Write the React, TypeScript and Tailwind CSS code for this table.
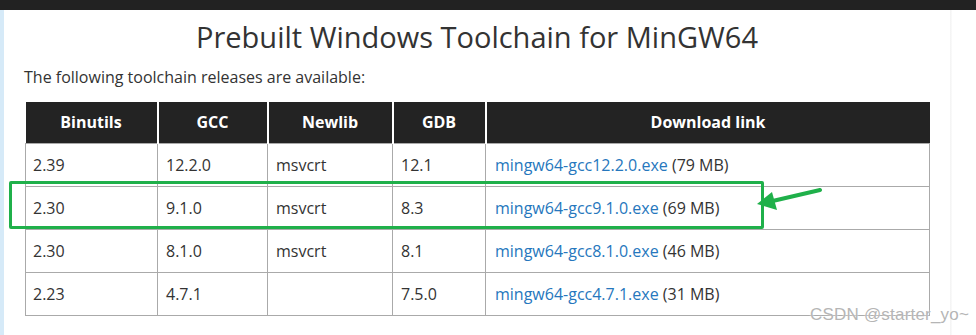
const rows = [
  { bin: "2.39", gcc: "12.2.0", newlib: "msvcrt", gdb: "12.1", file: "mingw64-gcc12.2.0.exe", size: "(79 MB)" },
  { bin: "2.30", gcc: "9.1.0", newlib: "msvcrt", gdb: "8.3", file: "mingw64-gcc9.1.0.exe", size: "(69 MB)" },
  { bin: "2.30", gcc: "8.1.0", newlib: "msvcrt", gdb: "8.1", file: "mingw64-gcc8.1.0.exe", size: "(46 MB)" },
  { bin: "2.23", gcc: "4.7.1", newlib: "", gdb: "7.5.0", file: "mingw64-gcc4.7.1.exe", size: "(31 MB)" },
];

const headers = ["Binutils", "GCC", "Newlib", "GDB", "Download link"];
const widths = ["w-[132px]", "w-[110px]", "w-[125px]", "w-[93px]", "w-[444px]"];

export default function App() {
  return (
    <div className="relative h-[335px] w-[976px] overflow-hidden bg-white font-['Open_Sans',sans-serif] text-[#333]">
      <div className="h-[10px] bg-[#222]" />

      <div className="flex h-[325px]">
        <div className="w-[4px] bg-[#d6eaf8]" />

        <main className="w-[946px]">
          <h1 className="mt-[7px] h-[40px] text-center text-[29px] leading-[40px] font-normal">
            Prebuilt Windows Toolchain for MinGW64
          </h1>

          <p className="mt-[8px] pl-[20px] text-[16px] leading-[24px]">
            The following toolchain releases are available:
          </p>

          <table className="mt-[13px] ml-[21px] table-fixed border-collapse text-[16px]">
            <thead>
              <tr className="h-[41px] bg-[#232323] text-white">
                {headers.map((h, i) => (
                  <th
                    key={h}
                    className={`${widths[i]} border-x-2 border-white p-0 text-center font-bold first:border-l-0 last:border-r-0`}
                  >
                    {h}
                  </th>
                ))}
              </tr>
            </thead>
            <tbody>
              {rows.map((r) => (
                <tr key={r.file} className="h-[43px]">
                  <td className="border border-[#aaa] px-[7px]">{r.bin}</td>
                  <td className="border border-[#aaa] px-[8px]">{r.gcc}</td>
                  <td className="border border-[#aaa] px-[8px]">{r.newlib}</td>
                  <td className="border border-[#aaa] px-[8px]">{r.gdb}</td>
                  <td className="border border-[#aaa] px-[9px]">
                    <a className="text-[#2677bd]">{r.file}</a> {r.size}
                  </td>
                </tr>
              ))}
            </tbody>
          </table>
        </main>

        <div className="w-[2px] bg-gradient-to-r from-[#f3f3f3] to-[#fafafa]" />
      </div>

      {/* highlight box + arrow */}
      <div className="absolute left-[9px] top-[181px] h-[48px] w-[755px] rounded-[2px] border-[3px] border-[#1fb04a]" />
      <svg className="absolute left-[750px] top-[180px]" width="80" height="35" viewBox="0 0 80 35">
        <line x1="70" y1="10" x2="14" y2="23" stroke="#1fb04a" strokeWidth="4" strokeLinecap="round" />
        <polygon points="7,24 22,12 27,30" fill="#1fb04a" />
      </svg>

      <div className="absolute left-[810px] top-[305px] font-['Liberation_Sans',Arial,sans-serif] text-[17px] leading-[20px] tracking-[0.2px] text-[#b5b5b5] [text-shadow:0_0_2px_#fff]">
        CSDN @starter_yo~
      </div>
    </div>
  );
}
